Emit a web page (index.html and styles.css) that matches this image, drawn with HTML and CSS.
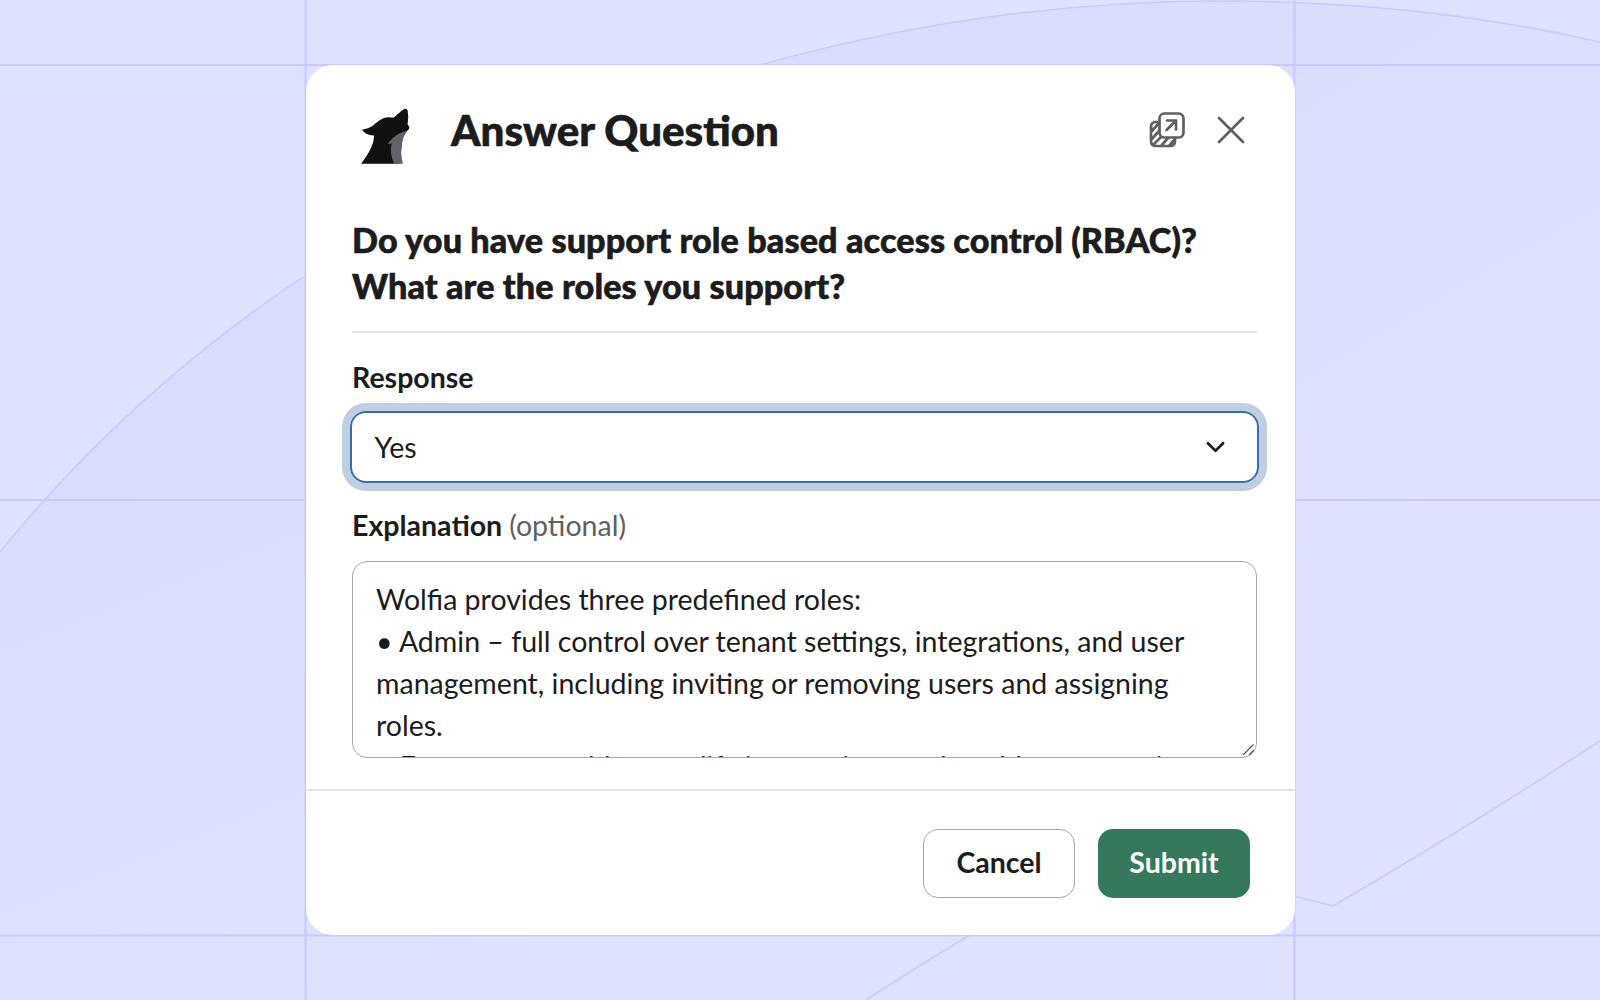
FILE: index.html
```html
<!DOCTYPE html>
<html lang="en">
<head>
    <meta charset="UTF-8">
    <meta name="viewport" content="width=device-width, initial-scale=1.0">
    <title>Answer Question | Wolfia</title>
    <link rel="stylesheet" href="styles.css">
</head>
<body>

    <svg class="backdrop" viewBox="0 0 1600 1000" aria-hidden="true">
        <defs>
            <linearGradient id="shade" gradientUnits="userSpaceOnUse" x1="200" y1="400" x2="440" y2="1000">
                <stop offset="0" stop-color="#dadcfd"/>
                <stop offset="1" stop-color="#dee2ff"/>
            </linearGradient>
            <linearGradient id="shade-top" gradientUnits="userSpaceOnUse" x1="1150" y1="0" x2="1450" y2="500">
                <stop offset="0" stop-color="#dadcfd"/>
                <stop offset="1" stop-color="#dfe1ff"/>
            </linearGradient>
        </defs>
        <path fill="url(#shade)" d="M0 552Q130 392 306 275L760 65V1000H0Z"/>
        <path fill="url(#shade-top)" d="M760 65Q990 1 1220 1T1600 42V741L1333 906L1295 896H760Z"/>
        <g class="lines">
            <path d="M0 552Q130 392 306 275M760 65Q990 1 1220 1Q1420 1 1600 42M1290 895L1333 906Q1460 832 1600 741M970 935Q915 968 866 1000"/>
            <path class="grid" d="M0 65H1600M0 500H1600M0 935.500H1600M305.500 0V1000M1294.500 0V1000"/>
        </g>
    </svg>

    <div class="modal">
        <div class="modal-header">
            <svg class="logo" viewBox="60 50 152 176">
                <path fill="#111" d="M66 121Q85 119 98 109Q120 88 136 84Q148 82 160 85L184 64Q197 53 202 63Q206 84 202 105L207 112Q208 120 201 124L189 130L178 222H63Q102 172 102 138Q78 139 66 121Z"/>
                <path fill="#64616c" d="M203 122Q190 127 178 131Q158 142 142 163L154 162Q148 194 162 222H188Q172 160 203 122Z"/>
            </svg>
            <h1>Answer Question</h1>
            <button type="button" class="icon-btn popout" aria-label="Open in new window">
                <svg viewBox="0 0 36 36">
                    <path d="M10 10H7Q2 10 2 15V29Q2 34 7 34H21Q26 34 26 29V26M2 20L10 11M2 28L10 19M4 33L12 25M12 34L19 26M20 34L26 27"/>
                    <rect x="10.500" y="1.500" width="24" height="24" rx="5"/>
                    <path d="M18 8.500H27V17.500M27 8.500L17.500 18"/>
                </svg>
            </button>
            <button type="button" class="icon-btn close" aria-label="Close">
                <svg viewBox="0 0 28 28"><path d="M2 2L26 26M26 2L2 26"/></svg>
            </button>
        </div>

        <form class="modal-body">
            <h2>Do you have support role based access control (RBAC)? What are the roles you support?</h2>

            <label for="response">Response</label>
            <div class="select" id="response" tabindex="0">
                <span>Yes</span>
                <svg viewBox="0 0 20 12"><path d="M2 2L10 10L18 2"/></svg>
            </div>

            <label for="explanation">Explanation <span class="optional">(optional)</span></label>
            <div class="textarea-wrap">
                <textarea id="explanation">Wolfia provides three predefined roles:
• Admin – full control over tenant settings, integrations, and user management, including inviting or removing users and assigning roles.
• Expert – can add or modify integrations and enable new versions, but cannot manage users.</textarea>
                <svg class="grip" viewBox="0 0 14 14"><path d="M1 12L11.500 1.500M7 12L12 7"/></svg>
            </div>
        </form>

        <div class="modal-footer">
            <button type="button" class="btn">Cancel</button>
            <button type="submit" class="btn btn-submit">Submit</button>
        </div>
    </div>

</body>
</html>
```
FILE: styles.css
```css
* {
    box-sizing: border-box;
}
body {
    margin: 0;
    height: 1000px;
    padding: 65px 305px 0 306px;
    overflow: hidden;
    background: #dee2ff;
    color: #1d1c1d;
    font-family: Lato, sans-serif;
    font-size: 28.53px;
}
button, textarea {
    font: inherit;
    color: inherit;
}
.backdrop {
    position: absolute;
    top: 0;
    left: 0;
    width: 1600px;
    height: 1000px;
}
.lines {
    fill: none;
    stroke: #c8caff;
    stroke-width: 1.5;
}
.grid {
    stroke-width: 2;
}
.modal {
    position: relative;
    height: 870px;
    display: flex;
    flex-direction: column;
    background: white;
    border-radius: 27px;
}
.modal-header {
    display: flex;
    align-items: center;
    height: 129px;
    padding: 0 50px 0 54px;
}
.logo {
    width: 51px;
    height: 59px;
    margin-top: 12px;
}
h1, h2 {
    font-weight: 900;
    -webkit-text-stroke: 0.6px #1d1c1d;
}
h1 {
    flex: 1;
    margin: 0 0 0 40px;
    font-size: 42.1px;
}
.icon-btn {
    display: flex;
    padding: 0;
    border: none;
    background: none;
}
.icon-btn svg {
    fill: none;
    stroke: #616061;
    stroke-width: 2.7;
    stroke-linecap: round;
    stroke-linejoin: round;
}
.popout svg {
    width: 36px;
    height: 36px;
}
.close {
    margin-left: 32px;
}
.close svg {
    width: 28px;
    height: 28px;
}
.modal-body {
    flex: 1;
    padding: 23px 38px 0 46px;
}
h2 {
    margin: 0 0 26px;
    padding-bottom: 23px;
    border-bottom: 2px solid #e2e2e2;
    font-size: 34.2px;
    line-height: 45.6px;
    letter-spacing: 0.1px;
}
label {
    display: block;
    font-weight: bold;
    line-height: 37px;
}
.optional {
    color: #616061;
    font-weight: normal;
}
.select {
    display: flex;
    align-items: center;
    justify-content: space-between;
    height: 72px;
    margin: 15px -2px 24px;
    padding: 0 32px 0 22.5px;
    border: 2px solid #3a6ea8;
    border-radius: 16px;
    outline: none;
    box-shadow: 0 0 0 8px #bfcfe1;
}
.select svg {
    width: 19px;
    height: 12px;
    fill: none;
    stroke: #1d1c1d;
    stroke-width: 2.8;
    stroke-linecap: round;
    stroke-linejoin: round;
}
.textarea-wrap {
    position: relative;
    margin-top: 17px;
}
textarea {
    display: block;
    width: 100%;
    height: 197px;
    padding: 17px 23px 16px;
    border: 1px solid #a8a8a8;
    border-radius: 15px;
    background: white;
    line-height: 41.8px;
    resize: none;
    overflow: hidden;
}
.grip {
    position: absolute;
    right: 1px;
    bottom: 1px;
    width: 14px;
    height: 14px;
    fill: none;
    stroke: #555;
    stroke-width: 1.2;
}
.modal-footer {
    display: flex;
    gap: 23px;
    height: 146px;
    padding: 38px 45px 0;
    justify-content: flex-end;
    border-top: 2px solid #e2e2e2;
}
.btn {
    width: 152px;
    height: 69px;
    padding: 0 0 3px;
    border: 1px solid #a8a8a8;
    border-radius: 15px;
    background: white;
    font-weight: bold;
}
.btn-submit {
    border: none;
    background: #35785b;
    color: white;
}
```
